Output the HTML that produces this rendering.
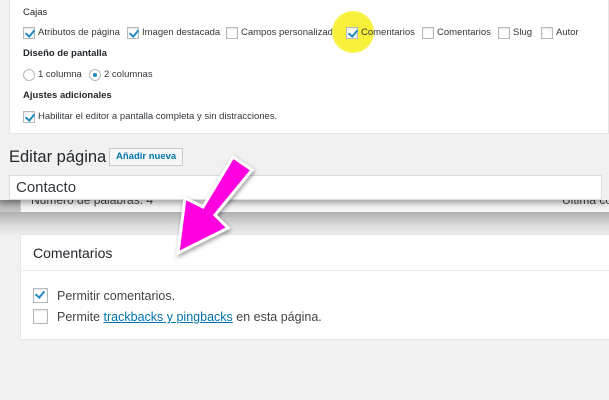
<!DOCTYPE html>
<html><head><meta charset="utf-8"><style>
*{margin:0;padding:0;box-sizing:border-box}
body{width:609px;height:400px;overflow:hidden;background:#f1f1f1;font-family:"Liberation Sans",sans-serif;color:#23282d;position:relative}
.abs{position:absolute;white-space:nowrap}
.cb{position:absolute;width:12px;height:12px;border:1px solid #b4b9be;background:#fff;box-shadow:inset 0 1px 2px rgba(0,0,0,.1)}
.cb.on::after{content:"";position:absolute;left:3px;top:0px;width:4px;height:7px;border:solid #1e8cbe;border-width:0 2px 2px 0;transform:rotate(40deg)}
.s{font-size:9.5px;color:#32373c;position:absolute;white-space:nowrap}
.h{font-size:9.5px;font-weight:bold;color:#23282d;position:absolute}
</style></head><body>
<!-- underlying page -->
<div class="abs" style="left:20px;top:185px;width:600px;height:28px;background:#f5f5f5;border:1px solid #ccc"></div>
<div class="abs" style="left:31px;top:193px;font-size:12px;color:#444">Número de palabras: 4</div>
<div class="abs" style="left:562px;top:193px;font-size:12px;color:#444">Última co</div>
<div class="abs" style="left:0;top:212px;width:609px;height:23px;background:linear-gradient(#b0b0b0,#dcdcdc 60%,#eeeeee)"></div>
<div class="abs" style="left:0;top:200px;width:20px;height:12px;background:linear-gradient(#a8a8a8,#c8c8c8)"></div>
<div class="abs" style="left:20px;top:234px;width:600px;height:106px;background:#fff;border:1px solid #e2e4e7"></div>
<div class="abs" style="left:20px;top:270px;width:600px;height:1px;background:#eee"></div>
<div class="abs" style="left:33px;top:245px;font-size:14px;color:#23282d">Comentarios</div>
<div class="cb on" style="left:33px;top:288px;width:15px;height:15px"></div>
<div class="abs" style="left:57px;top:289px;font-size:12.5px;color:#444">Permitir comentarios.</div>
<div class="cb" style="left:33px;top:309px;width:15px;height:15px"></div>
<div class="abs" style="left:57px;top:310px;font-size:12.5px;color:#444">Permite <span style="color:#0073aa;text-decoration:underline">trackbacks y pingbacks</span> en esta página.</div>
<!-- overlay top -->
<div class="abs" style="left:0;top:0;width:609px;height:200px;background:#f1f1f1;box-shadow:0 3px 6px rgba(0,0,0,.35)"></div>
<div class="abs" style="left:9px;top:0;width:600px;height:134px;background:#fff;border:1px solid #e5e5e5;border-top:none"></div>
<div class="h" style="left:23px;top:7px;font-weight:normal;color:#23282d">Cajas</div>
<div class="cb on" style="left:23px;top:27px"></div><div class="s" style="left:38px;top:27px">Atributos de página</div>
<div class="cb on" style="left:127px;top:27px"></div><div class="s" style="left:142px;top:27px">Imagen destacada</div>
<div class="cb" style="left:226px;top:27px"></div><div class="s" style="left:241px;top:27px">Campos personalizados</div>
<div class="abs" style="left:332px;top:11px;width:42px;height:42px;border-radius:50%;background:radial-gradient(#f7f03a 60%,#fbf66a 80%,rgba(255,250,120,.6))"></div>
<div class="cb on" style="left:346px;top:27px"></div><div class="s" style="left:361px;top:27px">Comentarios</div>
<div class="cb" style="left:422px;top:27px"></div><div class="s" style="left:437px;top:27px">Comentarios</div>
<div class="cb" style="left:498px;top:27px"></div><div class="s" style="left:513px;top:27px">Slug</div>
<div class="cb" style="left:541px;top:27px"></div><div class="s" style="left:556px;top:27px">Autor</div>
<div class="h" style="left:23px;top:48px">Diseño de pantalla</div>
<div class="abs" style="left:23px;top:69px;width:12px;height:12px;border-radius:50%;border:1px solid #b4b9be"></div><div class="s" style="left:38px;top:69px">1 columna</div>
<div class="abs" style="left:89px;top:69px;width:12px;height:12px;border-radius:50%;border:1px solid #b4b9be"><div style="position:absolute;left:3px;top:3px;width:4px;height:4px;border-radius:50%;background:#1e8cbe"></div></div><div class="s" style="left:104px;top:69px">2 columnas</div>
<div class="h" style="left:23px;top:90px">Ajustes adicionales</div>
<div class="cb on" style="left:23px;top:111px"></div><div class="s" style="left:38px;top:111px">Habilitar el editor a pantalla completa y sin distracciones.</div>
<div class="abs" style="left:9px;top:148px;font-size:16.5px;color:#23282d">Editar página</div>
<div class="abs" style="left:109px;top:148px;height:18px;padding:0 6px;border:1px solid #ccc;background:#f7f7f7;font-size:9.5px;font-weight:bold;color:#0073aa;line-height:16px">Añadir nueva</div>
<div class="abs" style="left:9px;top:175px;width:593px;height:25px;background:#fff;border:1px solid #ddd"></div>
<div class="abs" style="left:16px;top:179px;font-size:15px;color:#32373c">Contacto</div>
<!-- arrow -->
<svg class="abs" style="left:0;top:0" width="609" height="400">
<defs><filter id="f"><feDropShadow dx="1" dy="2" stdDeviation="2" flood-opacity=".4"/></filter></defs>
<polygon points="233,157 252,170 215,215 228,228 178,253 185,198 203,207" fill="#ff00e0" stroke="#fff" stroke-width="3" stroke-linejoin="miter" filter="url(#f)"/>
</svg>
</body></html>
